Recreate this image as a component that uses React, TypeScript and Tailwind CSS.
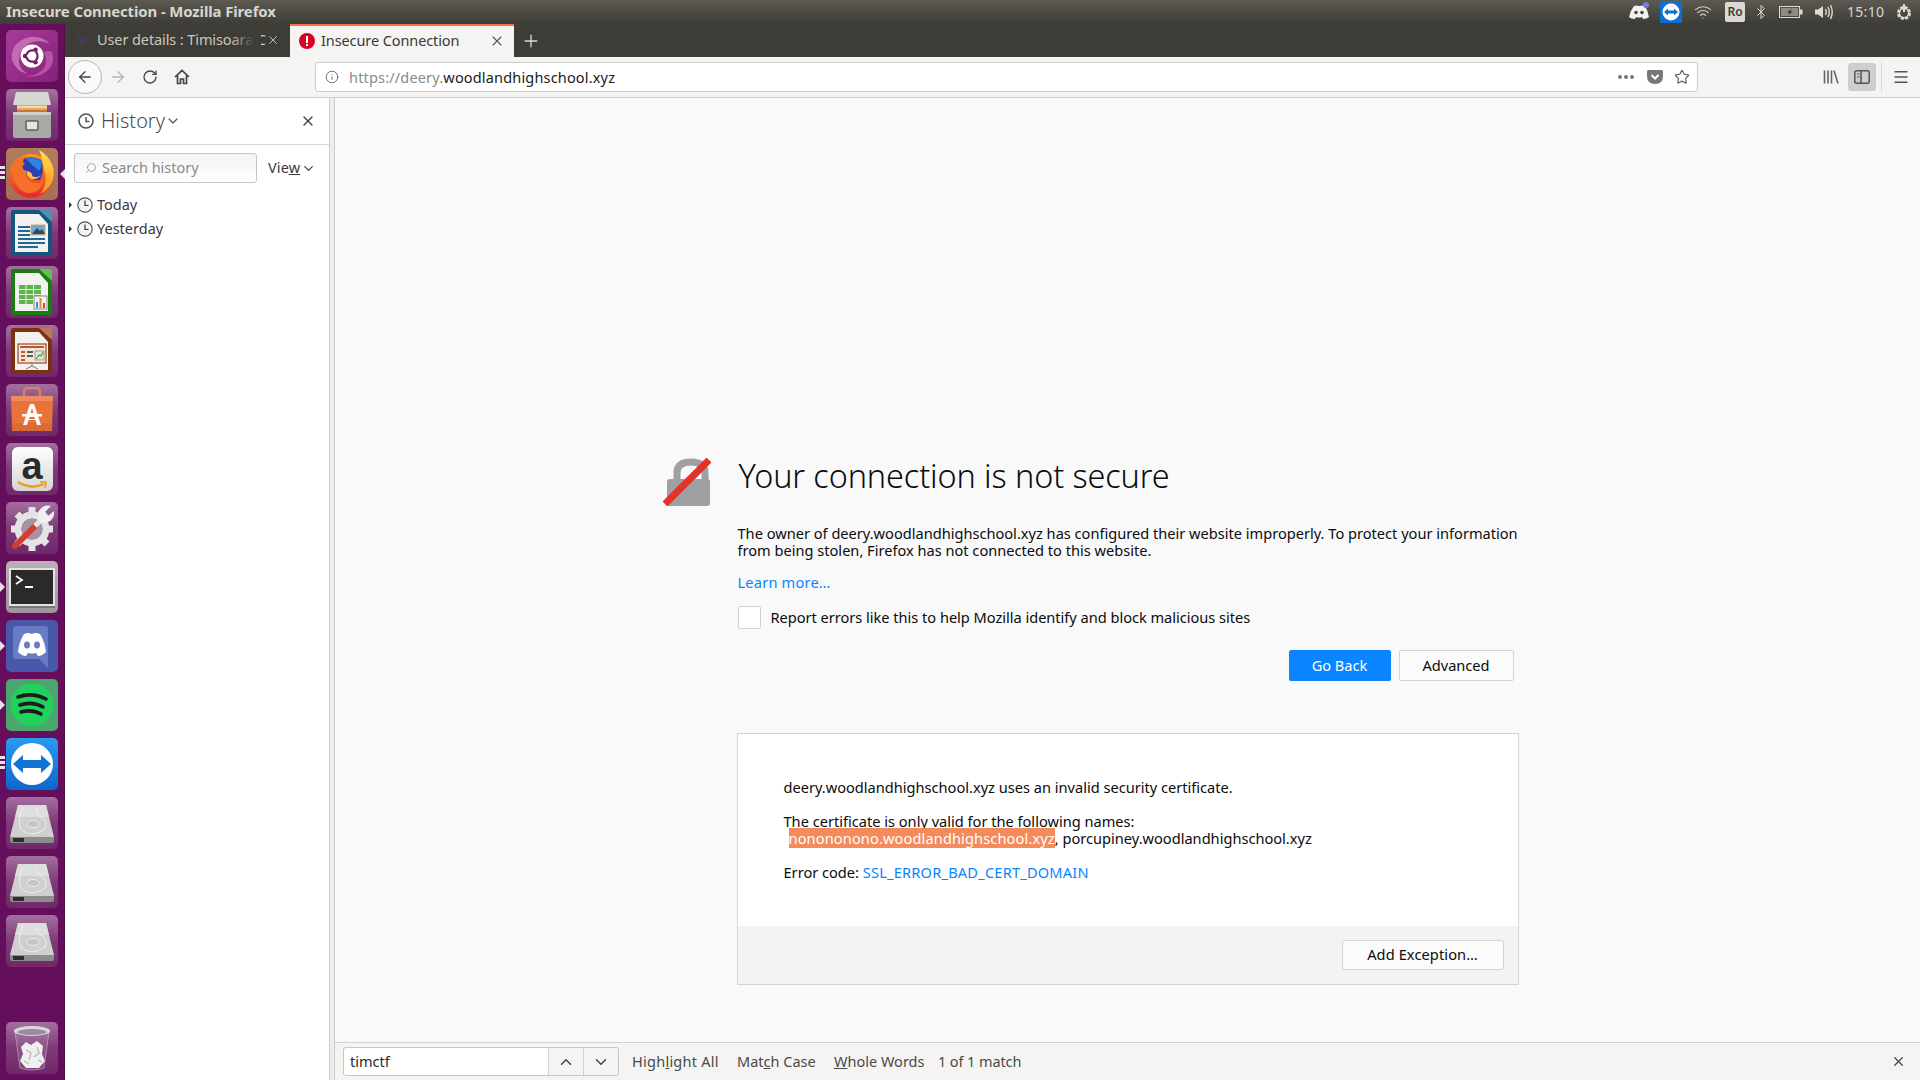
import { ChevronDown, ChevronUp, X, Plus, ArrowLeft, ArrowRight, RotateCw, Search, Info, Star, Menu, Bluetooth, Wifi } from "lucide-react";
import type { ReactNode } from "react";

function Tile({ className, pip, right, children }: { className: string; pip?: number; right?: boolean; children: ReactNode }) {
  return (
    <div className="relative h-[52px] w-[65px] shrink-0 pl-[6px]">
      {pip === 1 && <div className="absolute left-0 top-[21px] h-0 w-0 border-y-[5px] border-l-[5px] border-y-transparent border-l-[#e6e2e6]" />}
      {pip === 3 && (
        <div className="absolute left-0 top-[18px] flex flex-col gap-[2px]">
          <div className="h-[3px] w-[5px] bg-[#e6e2e6]" />
          <div className="h-[3px] w-[5px] bg-[#e6e2e6]" />
          <div className="h-[3px] w-[5px] bg-[#e6e2e6]" />
        </div>
      )}
      {right && <div className="absolute right-0 top-[21px] h-0 w-0 border-y-[5px] border-r-[5px] border-y-transparent border-r-[#e6e2e6]" />}
      <div className={`flex h-[52px] w-[52px] items-center justify-center overflow-hidden rounded-[5px] ${className}`}>{children}</div>
    </div>
  );
}

function OfficeDoc({ frame, corner, children }: { frame: string; corner: string; children: ReactNode }) {
  return (
    <svg width="44" height="50" viewBox="0 0 44 50">
      <path d="M3 2H32L42 12V48H3Q1 48 1 46V4Q1 2 3 2Z" fill={frame} />
      <path d="M29 2H40Q42 2 42 4V14Z" fill={corner} />
      <path d="M5 6H29L38 16V44H5Z" fill="#f1f1ef" />
      {children}
    </svg>
  );
}

function Drive() {
  return (
    <svg width="46" height="46" viewBox="0 0 46 46">
      <path d="M9 5H37L45 37H1Z" fill="#cfcfcf" />
      <path d="M9 5H37L40 17H6Z" fill="#dedede" />
      <path d="M14 8Q8 20 12 30Q24 38 36 29Q40 20 30 16Q27 11 27 8" fill="none" stroke="#eeeeee" strokeWidth="1" />
      <ellipse cx="24" cy="24" rx="6" ry="3.5" fill="#c4c4c4" stroke="#eeeeee" strokeWidth="1" />
      <path d="M1 37H45V41Q45 43 43 43H3Q1 43 1 41Z" fill="#8c8c8c" />
      <rect x="4" y="38" width="11" height="4" fill="#2e2e2e" />
    </svg>
  );
}

function Launcher() {
  const plain = "bg-gradient-to-b from-[#a4709f] via-[#7d3a77] to-[#70286a]";
  return (
    <div className="flex h-full w-[65px] shrink-0 flex-col gap-[7px] border-r border-[#4e0d48] bg-[#650f5c] py-[6px]">
      <Tile className="bg-gradient-to-br from-[#a83c98] to-[#85207a]">
        <svg width="52" height="52" viewBox="0 0 52 52">
          <path d="M6 30Q4 14 20 8Q34 4 44 14Q32 8 22 14Q12 20 13 32Q14 40 22 44Q10 42 6 30Z" fill="#c16cb3" />
          <path d="M46 22Q50 36 38 43Q30 48 20 46Q32 46 38 38Q42 30 38 22Q42 20 46 22Z" fill="#b553a6" />
          <circle cx="26" cy="26" r="11.5" fill="#ffffff" />
          <circle cx="26" cy="26" r="5.6" fill="none" stroke="#6d1f5f" strokeWidth="2.2" />
          <path d="M18.5 26H22M29.8 19.5L28 22.5M29.8 32.5L28 29.5" stroke="#ffffff" strokeWidth="2" />
          <circle cx="19" cy="26" r="2.2" fill="#6d1f5f" />
          <circle cx="29.6" cy="19.8" r="2.2" fill="#6d1f5f" />
          <circle cx="29.6" cy="32.2" r="2.2" fill="#6d1f5f" />
        </svg>
      </Tile>
      <Tile className={plain}>
        <svg width="42" height="48" viewBox="0 0 42 48">
          <path d="M5 1H37L40 14H2Z" fill="#d6d6d2" />
          <rect x="6" y="14" width="30" height="9" fill="#e9a65f" />
          <rect x="6" y="15" width="30" height="2" fill="#f4d9a8" />
          <rect x="6" y="19" width="30" height="2" fill="#c9743a" />
          <path d="M2 21H40V45Q40 47 38 47H4Q2 47 2 45Z" fill="#a9a9a5" />
          <path d="M2 21H40V24H2Z" fill="#cfcfcb" />
          <rect x="15" y="30" width="12" height="9" rx="1" fill="#e6e6e2" stroke="#5f5f5c" strokeWidth="1.5" />
        </svg>
      </Tile>
      <Tile pip={3} right className="bg-gradient-to-b from-[#b07d5b] to-[#a76e53]">
        <svg width="48" height="50" viewBox="0 0 48 50">
          <defs>
            <linearGradient id="ffo" x1="0" y1="0" x2="0" y2="1">
              <stop offset="0" stopColor="#ff9a1f" />
              <stop offset="1" stopColor="#e5262f" />
            </linearGradient>
            <linearGradient id="ffy" x1="0" y1="0" x2="0" y2="1">
              <stop offset="0" stopColor="#ffe34d" />
              <stop offset="1" stopColor="#ff8a1f" />
            </linearGradient>
          </defs>
          <circle cx="23" cy="27" r="22" fill="url(#ffo)" />
          <path d="M12 12Q22 5 33 11Q37 22 32 31Q22 32 16 24Z" fill="#2c3fb0" />
          <path d="M18 10Q26 7 33 12Q34 18 31 22Q24 16 18 10Z" fill="#2a86e0" />
          <path d="M31 1C43 8 48 20 45 30C43 38 37 43 32 45C38 38 39 28 36 21C35 14 34 7 31 1Z" fill="url(#ffy)" />
          <path d="M5 15C9 9 14 7 19 7C15 10 14 13 17 15C13 17 14 21 19 22C17 28 21 35 29 34C33 34 35 32 36 30C35 38 29 45 20 44C8 42 2 26 5 15Z" fill="#f5702a" />
          <path d="M19 22C23 23 25 25 24 27C27 29 31 28 33 26C30 31 22 32 19 26Z" fill="#ffc23a" />
        </svg>
      </Tile>
      <Tile className={plain}>
        <OfficeDoc frame="#16557f" corner="#4f8fb5">
          <rect x="8" y="18" width="12" height="2" fill="#1f6a94" />
          <rect x="8" y="22" width="12" height="2" fill="#1f6a94" />
          <rect x="8" y="26" width="12" height="2" fill="#1f6a94" />
          <rect x="8" y="30" width="27" height="2" fill="#1f6a94" />
          <rect x="8" y="34" width="27" height="2" fill="#1f6a94" />
          <rect x="8" y="38" width="20" height="2" fill="#1f6a94" />
          <rect x="21" y="17" width="14" height="10" fill="#7aa5c8" stroke="#c9a45a" strokeWidth="0.8" />
          <path d="M22 26L27 20L30 23L32 21L35 26Z" fill="#37475a" />
        </OfficeDoc>
      </Tile>
      <Tile className={plain}>
        <OfficeDoc frame="#1b7c12" corner="#5fc24c">
          <rect x="9" y="18" width="22" height="19" fill="#5bb548" />
          <path d="M9 22.5H31M9 27.5H31M9 32.5H31M16 18V37M23.5 18V37" stroke="#f1f1ef" strokeWidth="1" />
          <rect x="24" y="29" width="13" height="13" fill="#f1f1ef" stroke="#8c8c8c" strokeWidth="1" />
          <rect x="26" y="35" width="2" height="6" fill="#3f8ad0" />
          <rect x="29.5" y="31" width="2" height="10" fill="#e8872b" />
          <rect x="33" y="36" width="2" height="5" fill="#d9453a" />
        </OfficeDoc>
      </Tile>
      <Tile className={plain}>
        <OfficeDoc frame="#7b3211" corner="#b87a55">
          <rect x="8" y="18" width="28" height="19" fill="#f3e6dc" stroke="#9a4a20" strokeWidth="1.2" />
          <rect x="10" y="20" width="24" height="2" fill="#c0552a" />
          <rect x="11" y="25" width="4" height="2" fill="#c0552a" />
          <rect x="11" y="29" width="4" height="2" fill="#c0552a" />
          <rect x="11" y="33" width="4" height="2" fill="#c0552a" />
          <rect x="17" y="25" width="6" height="2" fill="#5a5a5a" />
          <rect x="17" y="29" width="6" height="2" fill="#5a5a5a" />
          <rect x="25" y="25" width="9" height="9" fill="#dfe8d8" stroke="#8c8c8c" strokeWidth="0.8" />
          <path d="M26 33L29 29L31 30L33 26" stroke="#4f9a3a" strokeWidth="1.2" fill="none" />
          <path d="M22 37V40M22 40L16 43M22 40L28 43" stroke="#777777" strokeWidth="1" />
        </OfficeDoc>
      </Tile>
      <Tile className={plain}>
        <svg width="42" height="46" viewBox="0 0 42 46">
          <path d="M13 11V5Q13 1 17 1H25Q29 1 29 5V11" fill="none" stroke="#d98158" strokeWidth="2.5" />
          <path d="M0 9H42L41 44H1Z" fill="#e9733a" />
          <path d="M0 9H42L41.7 14H0.3Z" fill="#f08d5f" />
          <path d="M1 36H41L41 44H1Z" fill="#dc6a35" />
          <path d="M19 17H23L30 38H26L24.5 33H17.5L16 38H12Z" fill="#ffffff" />
          <rect x="11" y="27" width="20" height="2.5" fill="#ffffff" />
          <path d="M19.5 26L21 21L22.5 26Z" fill="#e9733a" />
          <path d="M18.5 30H23.5L24 32H18Z" fill="#e9733a" />
        </svg>
      </Tile>
      <Tile className={plain}>
        <div className="relative flex h-[44px] w-[41px] flex-col items-center rounded-md bg-gradient-to-b from-white to-[#d5d5d5]">
          <span className="font-['Liberation_Sans',sans-serif] text-[38px] font-bold leading-[38px] text-[#2b2b2b]">a</span>
          <svg className="absolute bottom-[1px]" width="32" height="9" viewBox="0 0 32 9">
            <path d="M2 1Q15 9 28 3" fill="none" stroke="#f09a1a" strokeWidth="2.2" />
            <path d="M24 1L30 1L29 7" fill="none" stroke="#f09a1a" strokeWidth="1.6" />
          </svg>
        </div>
      </Tile>
      <Tile className={plain}>
        <svg width="48" height="48" viewBox="0 0 48 48">
          <path d="M24 3V10M24 40V47M3 25H10M38 25H45M9 10L14 15M34 35L39 40M9 40L14 35M39 10L34 15" stroke="#e4e4e4" strokeWidth="7" />
          <circle cx="24" cy="25" r="14" fill="none" stroke="#e4e4e4" strokeWidth="7" />
          <circle cx="24" cy="25" r="10.5" fill="#a892a6" />
          <path d="M7 42L27 22" stroke="#d23b2e" strokeWidth="6" strokeLinecap="round" />
          <path d="M27 22L32 17" stroke="#e8e8e8" strokeWidth="5" />
          <path d="M30 8Q35 0 43 2L37 8L40 12L46 7Q47 15 40 18Q34 20 31 17Z" fill="#f0f0f0" />
        </svg>
      </Tile>
      <Tile pip={1} className="bg-gradient-to-b from-[#b9b1b6] to-[#9f949b]">
        <div className="flex h-[38px] w-[46px] flex-col items-start border-[2px] border-[#e3e3e3] bg-[#2a2a2a] pl-[4px] pt-[5px] shadow-[0_2px_0_#777777]">
          <svg width="20" height="14" viewBox="0 0 20 14">
            <path d="M1 1L7 5L1 9" fill="none" stroke="#ffffff" strokeWidth="1.8" />
            <path d="M10 12H18" stroke="#ffffff" strokeWidth="1.8" />
          </svg>
        </div>
      </Tile>
      <Tile pip={1} className="bg-[#4a58ac]">
        <svg width="46" height="46" viewBox="0 0 46 46">
          <path d="M7 3H36Q39 3 39 6V45L30 36H7Q4 36 4 33V6Q4 3 7 3Z" fill="#6a7bc6" />
          <path d="M15 11Q21 9 22 11H23Q26 9 31 11Q36 19 37 29Q33 33 29 33L27 30Q23 31 19 30L17 33Q13 33 9 29Q10 19 15 11Z" fill="#ffffff" />
          <ellipse cx="18" cy="22" rx="3" ry="3.4" fill="#6a7bc6" />
          <ellipse cx="28" cy="22" rx="3" ry="3.4" fill="#6a7bc6" />
        </svg>
      </Tile>
      <Tile pip={1} className="bg-[#4ca76f]">
        <svg width="44" height="44" viewBox="0 0 44 44">
          <circle cx="22" cy="22" r="21.5" fill="#21d15e" />
          <path d="M8 14Q22 9 36 16M10 22Q22 18 33 24M11 29Q22 26 31 31" fill="none" stroke="#1c1c1c" strokeWidth="3.6" strokeLinecap="round" />
        </svg>
      </Tile>
      <Tile pip={3} className="bg-gradient-to-b from-[#2b9af0] to-[#0c68cc]">
        <svg width="44" height="44" viewBox="0 0 44 44">
          <circle cx="22" cy="22" r="21" fill="#ffffff" />
          <path d="M3 22L13 13V18H31V13L41 22L31 31V26H13V31Z" fill="#1173d4" />
        </svg>
      </Tile>
      <Tile className={plain}>
        <Drive />
      </Tile>
      <Tile className={plain}>
        <Drive />
      </Tile>
      <Tile className={plain}>
        <Drive />
      </Tile>
      <div className="mt-auto">
        <Tile className={plain}>
          <svg width="40" height="48" viewBox="0 0 40 48">
            <path d="M3 8L8 44Q20 48 32 44L37 8Z" fill="#ffffff" fillOpacity="0.12" />
            <path d="M3 8L8 44Q20 48 32 44L37 8" fill="none" stroke="#ffffff" strokeOpacity="0.35" />
            <ellipse cx="20" cy="7" rx="18" ry="5" fill="#dadada" />
            <ellipse cx="20" cy="8" rx="14.5" ry="3" fill="#9c8a9a" />
            <path d="M9 23L14 18L19 21L25 17L31 22L30 30L33 37L27 44H14L8 37L11 30Z" fill="#efefef" />
            <path d="M14 26L19 29L17 36M25 23L27 29L22 33M12 37L17 40M26 36L30 38" fill="none" stroke="#b5b5b5" strokeWidth="1.2" />
          </svg>
        </Tile>
      </div>
    </div>
  );
}

function TopBar() {
  return (
    <div className="flex h-[24px] shrink-0 items-center bg-gradient-to-b from-[#5c5a51] to-[#3d3c36] pb-[2px] pl-[6px] text-[14.9px] font-bold text-[#d9d6cf]">
      <span className="flex-1 tracking-[-0.1px]">Insecure Connection - Mozilla Firefox</span>
      <svg className="absolute left-[1628px] top-[2px]" width="22" height="20" viewBox="0 0 22 20">
        <path d="M6 4Q9 3 10 4H12Q14 3 17 4Q20 9 21 15Q19 17 15 17L14 15Q11 16 8 15L7 17Q3 17 1 15Q2 9 6 4Z" fill="#f2f2f2" />
        <circle cx="8" cy="10.5" r="1.8" fill="#4d4b44" />
        <circle cx="14" cy="10.5" r="1.8" fill="#4d4b44" />
        <circle cx="18" cy="3" r="3" fill="#6f83d8" />
      </svg>
      <div className="absolute left-[1660px] top-[1px] flex h-[22px] w-[22px] items-center justify-center bg-[#0e6fd0]">
        <svg width="18" height="18" viewBox="0 0 18 18">
          <circle cx="9" cy="9" r="8.5" fill="#ffffff" />
          <path d="M2 9L6 5.5V7.5H12V5.5L16 9L12 12.5V10.5H6V12.5Z" fill="#0e6fd0" />
        </svg>
      </div>
      <Wifi className="absolute left-[1694px] top-[3px] text-[#d0cec8]" size={18} strokeWidth={1.6} />
      <div className="absolute left-[1725px] top-[2px] flex h-[20px] w-[20px] items-center justify-center rounded-[2px] bg-[#dcd9d2] text-[12px] font-semibold text-[#3d3c36]">Ro</div>
      <Bluetooth className="absolute left-[1753px] top-[4px] text-[#dedbd4]" size={16} strokeWidth={1.5} />
      <svg className="absolute left-[1779px] top-[6px]" width="24" height="12" viewBox="0 0 24 12">
        <rect x="0.5" y="0.5" width="20" height="11" fill="none" stroke="#dedbd4" />
        <rect x="2" y="2" width="17" height="8" fill="#8f8d86" />
        <path d="M13 2.5L8 6.5H11L8.5 9.5L14 5.5H11Z" fill="#2f2e2a" />
        <rect x="21" y="3.5" width="2.5" height="5" fill="#dedbd4" />
      </svg>
      <svg className="absolute left-[1814px] top-[3px]" width="20" height="18" viewBox="0 0 20 18">
        <path d="M1 6.5H4L9 3V15L4 11.5H1Z" fill="#dedbd4" />
        <path d="M11.5 6Q13 9 11.5 12M14 4Q16.5 9 14 14M16.5 2Q20 9 16.5 16" fill="none" stroke="#dedbd4" strokeWidth="1.4" />
      </svg>
      <span className="absolute left-[1847px] top-[1px] text-[14px] font-normal tracking-[0.3px] text-[#d9d6cf]">15:10</span>
      <svg className="absolute left-[1895px] top-[3px]" width="18" height="18" viewBox="0 0 18 18">
        <circle cx="9" cy="10" r="5.5" fill="none" stroke="#dedbd4" strokeWidth="3" strokeDasharray="3 1.3" />
        <circle cx="9" cy="10" r="4.6" fill="none" stroke="#dedbd4" strokeWidth="1.2" />
        <path d="M9 1V9" stroke="#dedbd4" strokeWidth="2" />
      </svg>
    </div>
  );
}

function TabBar() {
  return (
    <div className="flex h-[33px] shrink-0 bg-[#3d3c36]">
      <div className="relative flex w-[225px] items-center pb-[2px] pl-[10px] pr-[10px] text-[14.5px] text-[#c9c7c0]">
        <svg className="mr-[6px] shrink-0" width="16" height="16" viewBox="0 0 16 16">
          <path d="M4 3L8 6L12 3L11 8L14 12L9 11L5 14L5 9L2 6Z" fill="#4a3a55" />
        </svg>
        <span className="whitespace-nowrap tracking-[-0.1px]">User details : Timisoara C</span>
        <div className="absolute left-[166px] top-0 h-full w-[30px] bg-gradient-to-r from-transparent to-[#3d3c36] to-80%" />
        <X className="relative ml-auto" size={16} strokeWidth={1.6} />
      </div>
      <div className="flex w-[224px] items-center border-t-2 border-[#f0734a] bg-[#f5f4f3] pb-[2px] pl-[9px] pr-[9px] text-[14.5px] text-[#3a3a3a]">
        <svg className="mr-[6px]" width="16" height="16" viewBox="0 0 16 16">
          <circle cx="8" cy="8" r="8" fill="#d70022" />
          <rect x="7" y="3" width="2" height="7" fill="#ffffff" />
          <rect x="7" y="11" width="2" height="2" fill="#ffffff" />
        </svg>
        <span className="flex-1 tracking-[-0.1px]">Insecure Connection</span>
        <X size={16} strokeWidth={1.6} className="text-[#555555]" />
      </div>
      <div className="flex w-[34px] items-center justify-center text-[#d9d7d0]">
        <Plus size={20} strokeWidth={1.6} />
      </div>
    </div>
  );
}

function NavBar() {
  return (
    <div className="flex h-[41px] shrink-0 items-center border-b border-[#cfcfcf] bg-[#f5f4f3]">
      <div className="ml-[3px] flex h-[34px] w-[34px] items-center justify-center rounded-full border border-[#b5b5b5] bg-[#fafafa] text-[#444444]">
        <ArrowLeft size={18} strokeWidth={1.7} />
      </div>
      <ArrowRight className="ml-[7px] text-[#b4b4b4]" size={18} strokeWidth={1.7} />
      <RotateCw className="ml-[15px] text-[#444444]" size={16} strokeWidth={1.9} />
      <svg className="ml-[16px]" width="16" height="16" viewBox="0 0 16 16">
        <path d="M1 8L8 1.5L15 8M3.5 6.5V14.5H6.5V10H9.5V14.5H12.5V6.5" fill="none" stroke="#444444" strokeWidth="1.7" />
      </svg>
      <div className="ml-[125px] flex h-[30px] w-[1383px] items-center rounded-[3px] border border-[#cccccc] bg-white pl-[9px] pr-[7px] text-[14.5px]">
        <Info size={14} className="text-[#666666]" strokeWidth={1.6} />
        <span className="ml-[10px] flex-1 pt-px tracking-[0.17px] text-[#8a8a8a]">
          https://deery.<span className="text-[#1b1b1b]">woodlandhighschool.xyz</span>
        </span>
        <div className="mr-[13px] flex gap-[2px]">
          <div className="h-[4px] w-[4px] rounded-full bg-[#777777]" />
          <div className="h-[4px] w-[4px] rounded-full bg-[#777777]" />
          <div className="h-[4px] w-[4px] rounded-full bg-[#777777]" />
        </div>
        <svg className="mr-[11px]" width="16" height="14" viewBox="0 0 16 14">
          <path d="M1.5 0H14.5Q16 0 16 1.5V6Q16 14 8 14Q0 14 0 6V1.5Q0 0 1.5 0Z" fill="#777777" />
          <path d="M4.5 5L8 8.5L11.5 5" fill="none" stroke="#ffffff" strokeWidth="2" />
        </svg>
        <Star size={16} className="text-[#666666]" strokeWidth={1.8} />
      </div>
      <div className="ml-[125px] flex h-[16px] items-center gap-[3px] text-[#666666]">
        <svg width="16" height="16" viewBox="0 0 16 16">
          <path d="M1.5 1.5V14.5M5 1.5V14.5M8.5 1.5V14.5M11 1.5L15 14.5" fill="none" stroke="#666666" strokeWidth="1.6" />
        </svg>
      </div>
      <div className="ml-[9px] flex h-[28px] w-[28px] items-center justify-center rounded-[3px] bg-[#cfcecd]">
        <svg width="16" height="14" viewBox="0 0 16 14">
          <rect x="0.8" y="0.8" width="14.4" height="12.4" rx="2" fill="none" stroke="#555555" strokeWidth="1.5" />
          <path d="M7 1V13" stroke="#555555" strokeWidth="1.5" />
          <path d="M3 4H5.5M3 7H5.5" stroke="#555555" strokeWidth="1.2" />
        </svg>
      </div>
      <div className="ml-[5px] h-[30px] w-px bg-[#d9d9d9]" />
      <Menu className="ml-[10px] text-[#555555]" size={18} strokeWidth={1.8} />
    </div>
  );
}

function HistoryRow({ label }: { label: string }) {
  return (
    <div className="flex h-[24px] items-center text-[14.5px] text-[#3a3a3a]">
      <div className="mr-[4px] ml-[4px] h-0 w-0 border-y-[3px] border-l-[3px] border-y-transparent border-l-[#333333]" />
      <svg className="mr-[4px] ml-px" width="16" height="16" viewBox="0 0 16 16">
        <circle cx="8" cy="8" r="7.2" fill="#f4f4f4" stroke="#555555" strokeWidth="1.2" />
        <path d="M8 3.5V8.5H11.5" fill="none" stroke="#333333" strokeWidth="1.2" />
      </svg>
      {label}
    </div>
  );
}

function Sidebar() {
  return (
    <div className="flex h-full w-[264px] shrink-0 flex-col bg-white">
      <div className="flex h-[47px] shrink-0 items-center border-b border-[#d6d6d6] pl-[13px] pr-[13px]">
        <svg width="16" height="16" viewBox="0 0 16 16">
          <circle cx="8" cy="8" r="7" fill="none" stroke="#555555" strokeWidth="1.6" />
          <path d="M8 4V8.5H11.5" fill="none" stroke="#555555" strokeWidth="1.5" />
        </svg>
        <span className="ml-[7px] text-[19.8px] font-light tracking-[0.05px] text-[#4a4a4a]">History</span>
        <ChevronDown className="text-[#555555]" size={16} strokeWidth={1.8} />
        <X className="ml-auto text-[#444444]" size={16} strokeWidth={2} />
      </div>
      <div className="flex items-center pl-[9px] pt-[8px]">
        <div className="flex h-[30px] w-[183px] items-center rounded-[3px] border border-[#c6c6c6] bg-gradient-to-b from-[#f4f4f4] to-white pb-[1px] pl-[10px] text-[14.5px] text-[#8a8a8a]">
          <Search className="-scale-x-100" size={12} strokeWidth={1.5} />
          <span className="ml-[5px]">Search history</span>
        </div>
        <span className="ml-[11px] text-[14.5px] tracking-[0.1px] text-[#3a3a3a]">
          Vie<span className="underline">w</span>
        </span>
        <ChevronDown className="ml-[1px] text-[#444444]" size={15} strokeWidth={2} />
      </div>
      <div className="mt-[10px] flex flex-col">
        <HistoryRow label="Today" />
        <HistoryRow label="Yesterday" />
      </div>
    </div>
  );
}

function ErrorPage() {
  return (
    <div className="min-h-0 flex-1 bg-[#f9f9fa] pt-[356px] text-[14.6px] leading-[17px] text-[#0c0c0d]">
      <div className="mx-auto w-[782px]">
        <div className="flex">
          <svg className="-ml-[74px] mr-[27px] mt-[4px] shrink-0" width="48" height="48" viewBox="0 0 48 48">
            <path d="M14 24V15Q14 4 28 4Q42 4 42 15V24" fill="none" stroke="#a0a0a0" strokeWidth="7" />
            <rect x="4" y="21" width="43" height="27" rx="3" fill="#a0a0a0" />
            <path d="M2 46L46 2" stroke="#e2332a" strokeWidth="7" />
          </svg>
          <div className="w-full">
            <h1 className="pl-px text-[32.4px] font-light leading-[42px] tracking-[-0.1px] text-[#0c0c0d]">Your connection is not secure</h1>
            <p className="mt-[29px] w-[790px] whitespace-nowrap">
              The owner of deery.woodlandhighschool.xyz has configured their website improperly. To protect your information
              <br />
              from being stolen, Firefox has not connected to this website.
            </p>
            <div className="mt-[15px] tracking-[0.2px] text-[#0a84ff]">Learn more…</div>
            <div className="mt-[15px] flex items-center">
              <div className="h-[23px] w-[23px] rounded-[2px] border border-[#d0d0d0] bg-white" />
              <span className="ml-[10px] tracking-[-0.02px]">Report errors like this to help Mozilla identify and block malicious sites</span>
            </div>
            <div className="mt-[21px] flex justify-end gap-[8px] pr-[6px]">
              <div className="flex h-[31px] w-[102px] items-center justify-center rounded-[2px] bg-[#0a84ff] text-white">Go Back</div>
              <div className="flex h-[31px] w-[115px] items-center justify-center rounded-[2px] border border-[#d4d4d4] bg-[#fbfbfb]">Advanced</div>
            </div>
          </div>
        </div>
        <div className="mt-[52px] flex h-[252px] w-[782px] flex-col border border-[#d4d4d4] bg-white">
          <div className="flex-1 pl-[46px] pt-[45px]">
            <div>deery.woodlandhighschool.xyz uses an invalid security certificate.</div>
            <div className="mt-[17px]">The certificate is only valid for the following names:</div>
            <div>
              <span className="ml-[5px] bg-[#f58a5c] tracking-[0.12px] text-white">nonononono.woodlandhighschool.xyz</span>, porcupiney.woodlandhighschool.xyz
            </div>
            <div className="mt-[17px]">
              Error code: <span className="tracking-[0.2px] text-[#0a84ff]">SSL_ERROR_BAD_CERT_DOMAIN</span>
            </div>
          </div>
          <div className="flex h-[58px] shrink-0 items-center justify-end bg-[#f3f3f5] pr-[14px]">
            <div className="flex h-[30px] w-[162px] items-center justify-center rounded-[2px] border border-[#d4d4d4] bg-[#fbfbfb] pb-[2px] tracking-[0.1px]">Add Exception…</div>
          </div>
        </div>
      </div>
    </div>
  );
}

function FindBar() {
  return (
    <div className="flex h-[38px] shrink-0 items-center border-t border-[#d0d0d0] bg-[#f5f4f3] pl-[8px] pr-[14px] text-[14.5px] text-[#4a4a4a]">
      <div className="flex h-[29px] w-[276px] items-center rounded-[3px] border border-[#c6c6c6] bg-white">
        <span className="flex-1 pl-[6px] text-[#2a2a2a]">timctf</span>
        <div className="flex h-full w-[35px] items-center justify-center border-l border-[#d0d0d0] bg-[#f5f4f3] text-[#444444]">
          <ChevronUp size={18} strokeWidth={2} />
        </div>
        <div className="flex h-full w-[35px] items-center justify-center rounded-r-[3px] border-l border-[#d0d0d0] bg-[#f5f4f3] text-[#444444]">
          <ChevronDown size={18} strokeWidth={2} />
        </div>
      </div>
      <span className="ml-[13px] w-[105px] tracking-[0.25px]">
        High<span className="underline">l</span>ight All
      </span>
      <span className="w-[97px] whitespace-nowrap">
        Mat<span className="underline">c</span>h Case
      </span>
      <span className="w-[104px] whitespace-nowrap">
        <span className="underline">W</span>hole Words
      </span>
      <span className="whitespace-nowrap tracking-[-0.1px]">1 of 1 match</span>
      <X className="ml-auto text-[#444444]" size={15} strokeWidth={2} />
    </div>
  );
}

export default function App() {
  return (
    <div className="relative flex h-[1080px] w-[1920px] flex-col overflow-hidden font-['Noto_Sans',sans-serif]">
      <TopBar />
      <div className="flex min-h-0 flex-1">
        <Launcher />
        <div className="flex min-w-0 flex-1 flex-col">
          <TabBar />
          <NavBar />
          <div className="flex min-h-0 flex-1">
            <Sidebar />
            <div className="w-[6px] shrink-0 border-x border-[#cfcbc6] bg-[#eeeded]" />
            <div className="flex min-w-0 flex-1 flex-col">
              <ErrorPage />
              <FindBar />
            </div>
          </div>
        </div>
      </div>
    </div>
  );
}
